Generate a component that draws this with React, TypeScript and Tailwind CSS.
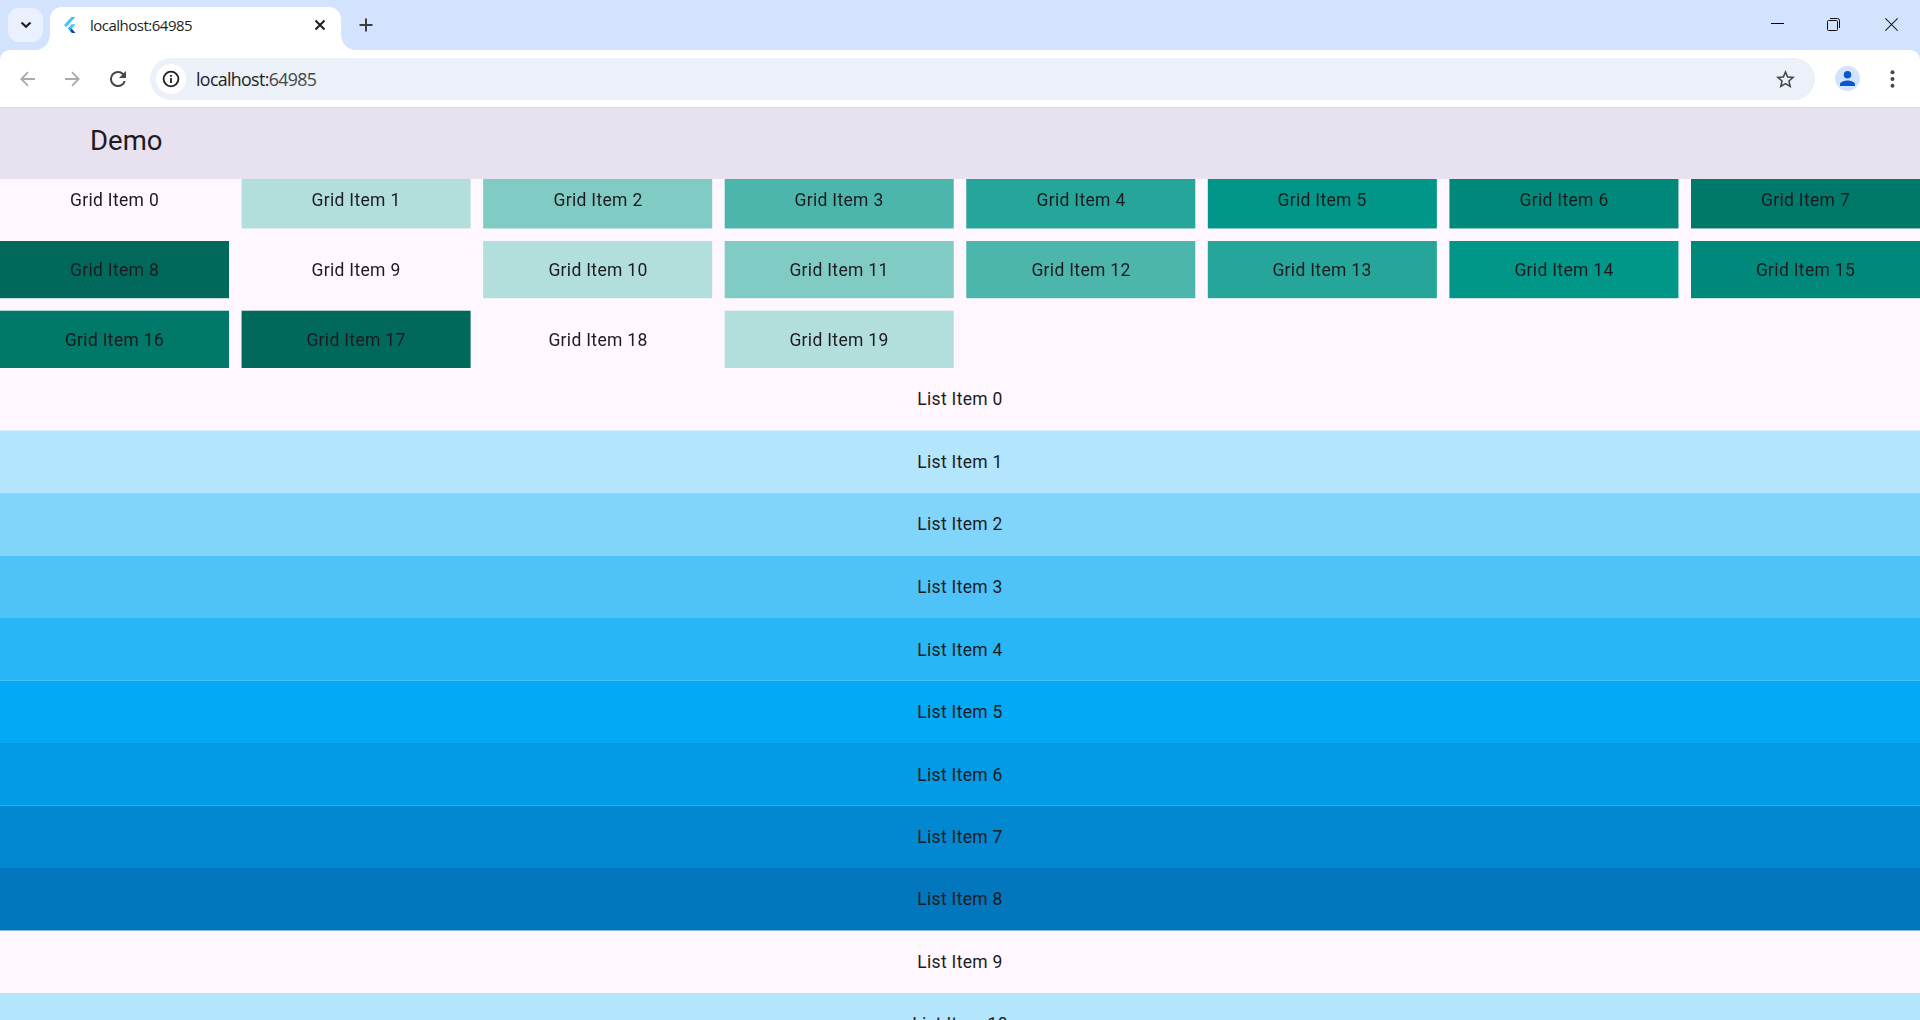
import React from "react";

const teal = [
  "bg-transparent",
  "bg-[#b2dfdb]",
  "bg-[#80cbc4]",
  "bg-[#4db6ac]",
  "bg-[#26a69a]",
  "bg-[#009688]",
  "bg-[#00897b]",
  "bg-[#00796b]",
  "bg-[#00695c]",
];

const blue = [
  "bg-transparent",
  "bg-[#b3e5fc]",
  "bg-[#81d4fa]",
  "bg-[#4fc3f7]",
  "bg-[#29b6f6]",
  "bg-[#03a9f4]",
  "bg-[#039be5]",
  "bg-[#0288d1]",
  "bg-[#0277bd]",
];

// Blended hairline drawn on top of every odd list row, where the row starts on a half pixel.
const seams = [
  "border-[#d8eefd]",
  "border-[#87d4fa]",
  "border-[#4bc0f7]",
  "border-[#41a9e2]",
  "border-[#80b7de]",
];

// Column widths and partial edge coverage of an eight column grid with 12.5px gutters.
const columns = [
  "ml-0 w-[229px]",
  "ml-[12px] w-[230px] [mask-image:linear-gradient(90deg,rgb(0_0_0/.44)_1px,#000_1px,#000_229px,rgb(0_0_0/.6)_229px)]",
  "ml-[12px] w-[230px] [mask-image:linear-gradient(90deg,rgb(0_0_0/.87)_1px,#000_1px,#000_229px,rgb(0_0_0/.19)_229px)]",
  "ml-[11px] w-[230px] [mask-image:linear-gradient(90deg,rgb(0_0_0/.3)_1px,#000_1px,#000_229px,rgb(0_0_0/.75)_229px)]",
  "ml-[12px] w-[230px] [mask-image:linear-gradient(90deg,rgb(0_0_0/.75)_1px,#000_1px,#000_229px,rgb(0_0_0/.3)_229px)]",
  "ml-[11px] w-[230px] [mask-image:linear-gradient(90deg,rgb(0_0_0/.19)_1px,#000_1px,#000_229px,rgb(0_0_0/.87)_229px)]",
  "ml-[12px] w-[230px] [mask-image:linear-gradient(90deg,rgb(0_0_0/.6)_1px,#000_1px,#000_229px,rgb(0_0_0/.44)_229px)]",
  "ml-[12px] w-[229px]",
];

const rows = [
  "h-[50px] pb-[8px] [mask-image:linear-gradient(#000_49px,rgb(0_0_0/.46)_49px)]",
  "mt-[12px] h-[58px] [mask-image:linear-gradient(#000_57px,rgb(0_0_0/.2)_57px)]",
  "mt-[11px] h-[58px] [mask-image:linear-gradient(rgb(0_0_0/.3)_1px,#000_1px)]",
];

const cellPadding = ["-mb-[8px] pb-[8px]", "", "pt-[2px]"];

function TabStrip() {
  return (
    <div className="flex h-[50px] bg-[#d3e3fd]">
      <div className="mt-2 ml-2 flex h-[34px] w-[35px] items-center justify-center rounded-[11px] bg-[#e9f0fe]">
        <svg width="12" height="8" viewBox="0 0 12 8" fill="none" stroke="#1f1f1f" strokeWidth="2.2">
          <path d="M1.5 1.5 6 5.8 10.5 1.5" />
        </svg>
      </div>
      <svg className="mt-[34px] ml-[-8px] w-[15px] shrink-0" width="15" height="16" viewBox="0 0 15 16">
        <path d="M15 0C15 9 9 16 0 16H15Z" fill="#fff" />
      </svg>
      <div className="mt-[7px] flex h-[43px] w-[291px] items-center rounded-t-[12px] bg-white pr-[15px] pb-[7px] pl-[14px]">
        <svg width="12" height="16" viewBox="0 0 12 16">
          <path d="M0 8 7.5 0H11.5L2.2 10Z" fill="#44c4fa" />
          <path d="M7.5 7.2h4L7.8 11.4 5.8 9.4Z" fill="#44c4fa" />
          <path d="M5.8 13.4 7.8 11.4 11.5 16H7.8Z" fill="#0b4ea2" />
          <path d="M3.8 11.4 5.8 9.4 7.8 11.4 5.8 13.4Z" fill="#1fa7f0" />
        </svg>
        <span className="mt-px ml-[14px] flex-1 font-['Open_Sans'] text-[15px] tracking-[-0.5px] text-[#1f1f1f]">
          localhost:64985
        </span>
        <svg width="12" height="12" viewBox="0 0 12 12" stroke="#1f1f1f" strokeWidth="2">
          <path d="M1.5 1.5 10.5 10.5M10.5 1.5 1.5 10.5" />
        </svg>
      </div>
      <svg className="mt-[34px] shrink-0" width="15" height="16" viewBox="0 0 15 16">
        <path d="M0 0C0 9 6 16 15 16H0Z" fill="#fff" />
      </svg>
      <svg className="mt-[18px] ml-[3px]" width="14" height="14" viewBox="0 0 14 14" stroke="#3c3e42" strokeWidth="2">
        <path d="M7 .5v13M.5 7h13" />
      </svg>
      <div className="mr-[22px] ml-auto flex items-start gap-[43px] pt-[18px]">
        <svg width="13" height="12" viewBox="0 0 13 12" shapeRendering="crispEdges">
          <path d="M0 5.5h13" stroke="#000" />
        </svg>
        <svg width="13" height="13" viewBox="0 0 13 13" fill="none" stroke="#111">
          <rect x=".5" y="2.5" width="10" height="10" rx="1" />
          <path d="M3 .5h7.5q2 0 2 2V10" />
        </svg>
        <svg className="ml-[2px]" width="13" height="13" viewBox="0 0 13 13" stroke="#222" strokeWidth="1.1">
          <path d="M.3.3 12.7 12.7M12.7.3.3 12.7" />
        </svg>
      </div>
    </div>
  );
}

function Toolbar() {
  return (
    <div className="bg-[#d3e3fd]">
      <div className="flex h-[57px] items-center rounded-t-[10px] bg-white">
        <svg className="ml-5" width="15" height="16" viewBox="0 0 15 16" fill="none" stroke="#a9abae" strokeWidth="1.8">
          <path d="M15 8H1.5M8 1.2 1.3 8 8 14.8" />
        </svg>
        <svg className="ml-[30px]" width="15" height="16" viewBox="0 0 15 16" fill="none" stroke="#a9abae" strokeWidth="1.8">
          <path d="M0 8h13.5M7 1.2 13.7 8 7 14.8" />
        </svg>
        <svg className="ml-[30px]" width="16" height="16" viewBox="4 4 16 16" fill="#474747">
          <path d="M17.65 6.35A7.96 7.96 0 0 0 12 4a8 8 0 1 0 7.73 10h-2.08A6 6 0 1 1 12 6c1.66 0 3.14.69 4.22 1.78L13 11h7V4z" />
        </svg>
        <div className="ml-6 flex h-[42px] w-[1665px] items-center rounded-full bg-[#ebf0f9] pr-[20px] pl-[6px]">
          <div className="flex size-[30px] items-center justify-center rounded-full bg-white">
            <svg width="18" height="18" viewBox="0 0 18 18" fill="none" stroke="#1f1f1f" strokeWidth="1.8">
              <circle cx="9" cy="9" r="7.4" />
              <path d="M9 8v5M9 5v1.8" />
            </svg>
          </div>
          <span className="mt-px ml-[10px] flex-1 font-['Open_Sans'] text-[17.8px] tracking-[-0.65px] text-[#1f1f1f]">
            localhost:<span className="text-[#474747]">64985</span>
          </span>
          <svg width="19" height="18" viewBox="2 2 20 19" fill="#474747">
            <path d="M22 9.24l-7.19-.62L12 2 9.19 8.63 2 9.24l5.46 4.73L5.82 21 12 17.27 18.18 21l-1.63-7.03L22 9.24zM12 15.4l-3.76 2.27 1-4.28-3.32-2.88 4.38-.38L12 6.1l1.71 4.04 4.38.38-3.32 2.88 1 4.28L12 15.4z" />
          </svg>
        </div>
        <div className="ml-5 flex size-[25px] items-center justify-center rounded-full bg-[#d3e3fd]">
          <svg width="15" height="15" viewBox="4 4 16 16" fill="#0b57d0">
            <path d="M12 12a4 4 0 1 0 0-8 4 4 0 0 0 0 8zm0 2c-2.67 0-8 1.34-8 4v2h16v-2c0-2.66-5.33-4-8-4z" />
          </svg>
        </div>
        <svg className="ml-[30px]" width="5" height="18" viewBox="0 0 5 18" fill="#474747">
          <circle cx="2.5" cy="2.3" r="2" />
          <circle cx="2.5" cy="9" r="2" />
          <circle cx="2.5" cy="15.7" r="2" />
        </svg>
      </div>
    </div>
  );
}

export default function App() {
  return (
    <div className="flex h-[1020px] w-[1920px] flex-col overflow-hidden bg-[#fef7ff]">
      <TabStrip />
      <Toolbar />
      <header className="flex h-[72px] shrink-0 items-center border-t border-[#dfe1e0] bg-[#e8e1ef] pb-[6px] pl-[90px] font-[Roboto] text-[27.5px] text-[#1d1b20]">
        Demo
      </header>
      <main className="flex-1 overflow-hidden font-[Roboto] text-[17.5px] tracking-[0.3125px] text-[#1d1b20]">
        {rows.map((row, r) => (
          <div key={r} className={`flex ${row}`}>
            {columns.slice(0, r === 2 ? 4 : 8).map((column, c) => {
              const i = r * 8 + c;
              return (
                <div
                  key={i}
                  className={`flex shrink-0 items-center justify-center ${cellPadding[r]} ${column} ${teal[i % 9]}`}
                >
                  Grid Item {i}
                </div>
              );
            })}
          </div>
        ))}
        {Array.from({ length: 11 }, (_, i) => (
          <div
            key={i}
            className={`flex items-center justify-center ${
              i % 2
                ? `h-[63px] border-t ${seams[(i - 1) / 2]}`
                : i === 4 || i === 6
                  ? "h-[62px] pt-[3px]"
                  : "h-[62px] pt-px"
            } ${blue[i % 9]}`}
          >
            List Item {i}
          </div>
        ))}
      </main>
    </div>
  );
}
